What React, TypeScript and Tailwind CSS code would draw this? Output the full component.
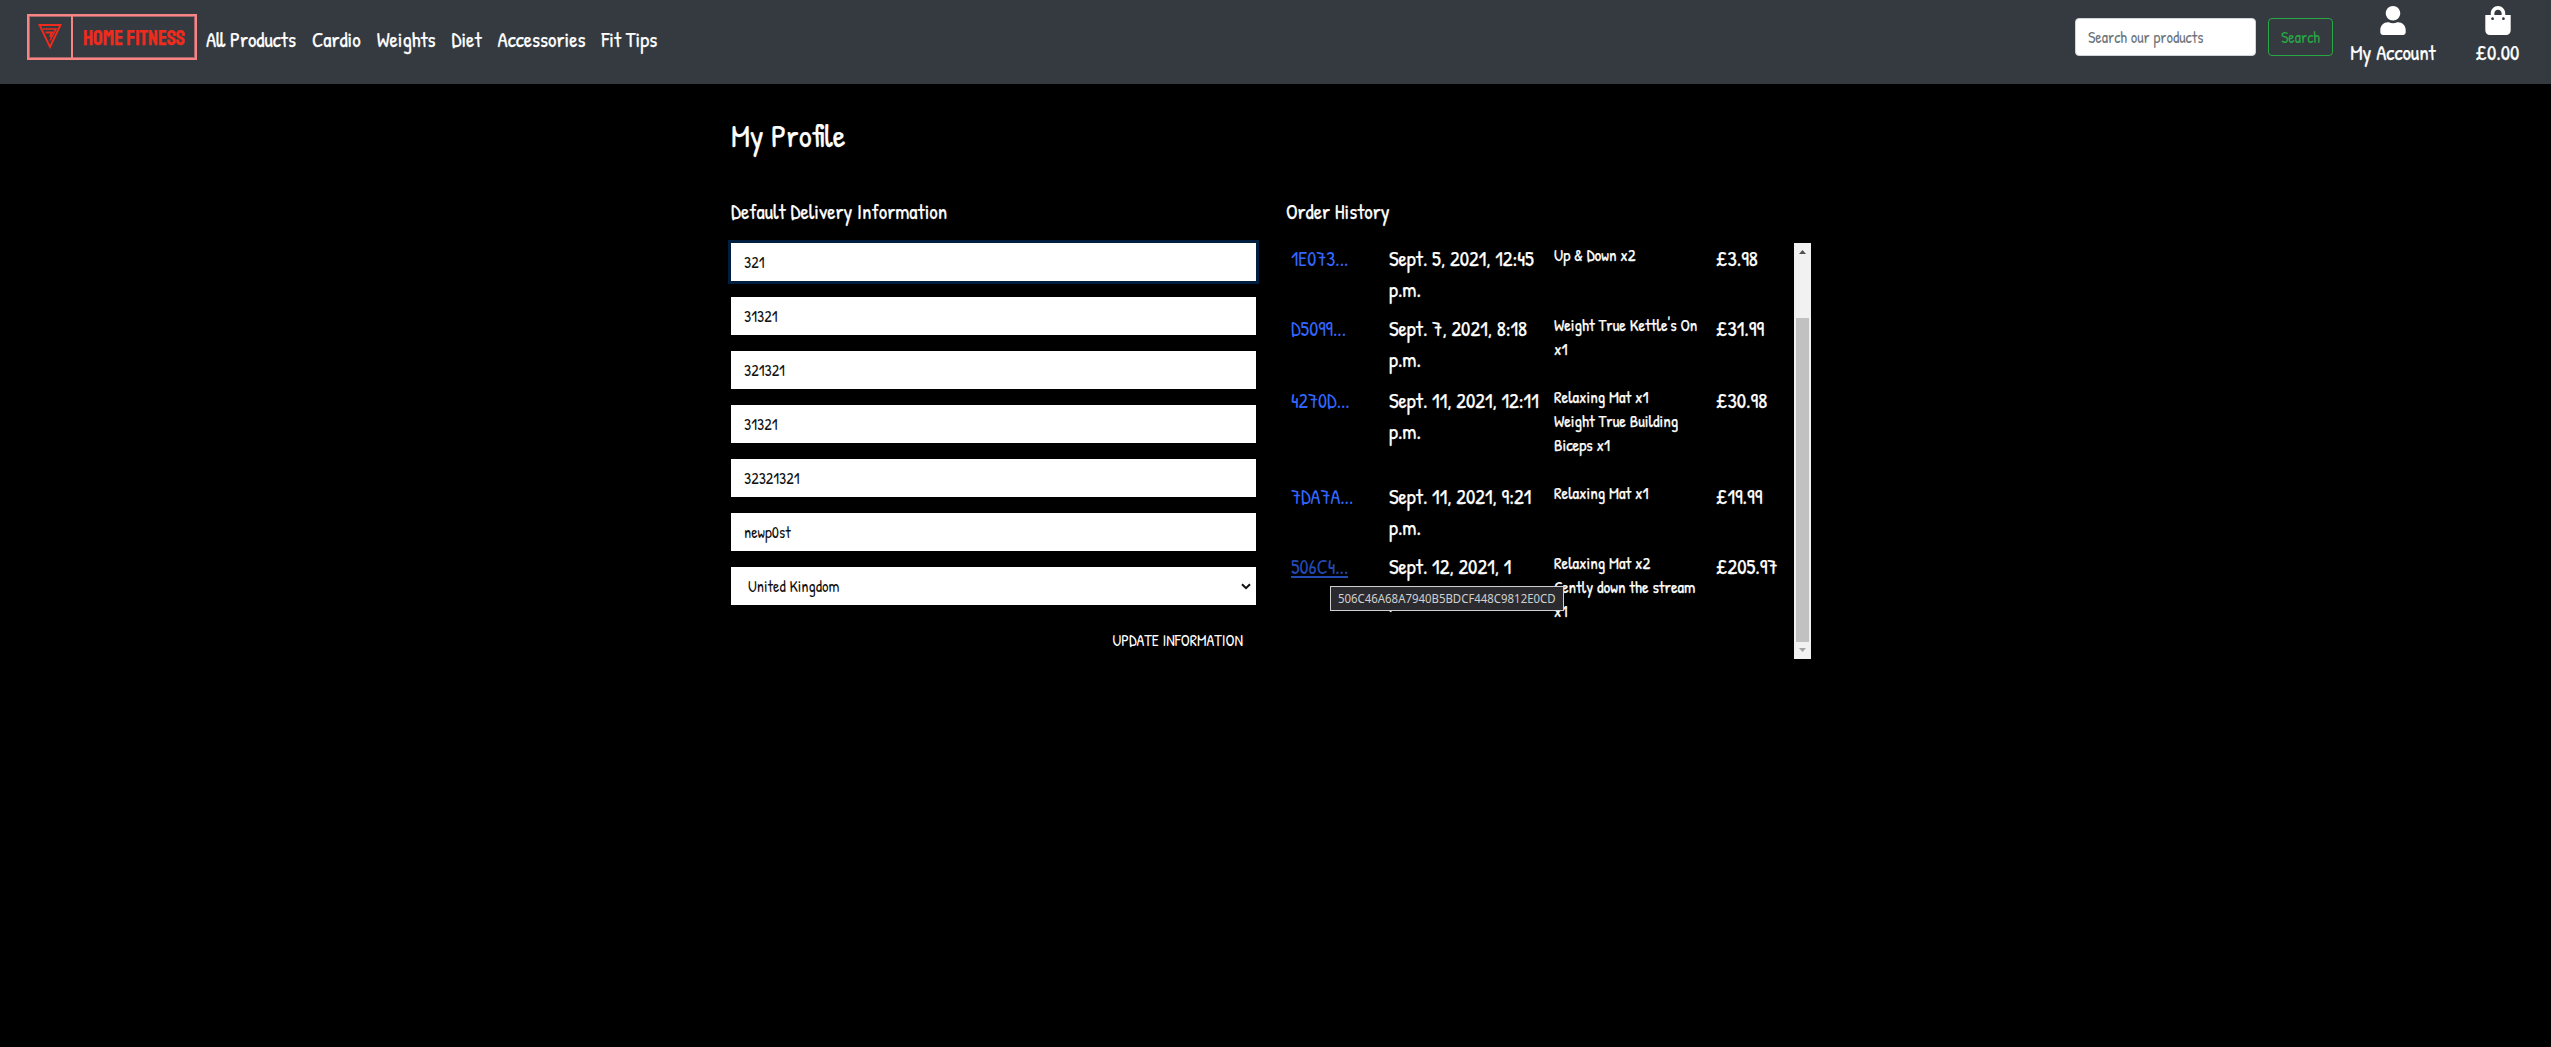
import React, { useLayoutEffect, useRef, useState } from "react";
import { FaUser, FaShoppingBag } from "react-icons/fa";

/** A single line of text condensed or widened to an exact width. */
function Fit({ w, children }: { w: number; children: string }) {
  const ref = useRef<HTMLSpanElement>(null);
  const [scale, setScale] = useState(1);
  useLayoutEffect(() => {
    if (ref.current) setScale(w / ref.current.offsetWidth);
  }, [w, children]);
  return (
    <span className="block whitespace-nowrap" style={{ width: w }}>
      <span ref={ref} className="inline-block origin-left align-top" style={{ transform: `scaleX(${scale})` }}>
        {children}
      </span>
    </span>
  );
}

const NAV = ["All Products", "Cardio", "Weights", "Diet", "Accessories", "Fit Tips"];
const FIELDS = ["321", "31321", "321321", "31321", "32321321", "newp0st"];

const ORDERS = [
  { id: "1E073...", date: "Sept. 5, 2021, 12:45", items: ["Up & Down x2"], total: "£3.98", height: "h-[70px]" },
  { id: "D5099...", date: "Sept. 7, 2021, 8:18", items: ["Weight True Kettle's On", "x1"], total: "£31.99", height: "h-[72px]" },
  { id: "4270D...", date: "Sept. 11, 2021, 12:11", items: ["Relaxing Mat x1", "Weight True Building", "Biceps x1"], total: "£30.98", height: "h-[96px]" },
  { id: "7DA7A...", date: "Sept. 11, 2021, 9:21", items: ["Relaxing Mat x1"], total: "£19.99", height: "h-[70px]" },
  { id: "506C4...", date: "Sept. 12, 2021, 1", items: ["Relaxing Mat x2", "Gently down the stream", "x1"], total: "£205.97", height: "h-[108px]" },
];

function Logo() {
  return (
    <div className="mt-[14px] flex h-[46px] w-[170px] shrink-0 border-2 border-[#f88484] inset-shadow-[0_0_0_1px_#a8666c]">
      <div className="flex w-[44px] items-center justify-center border-r-2 border-[#f88484] pb-px">
        <svg width="24" height="25" viewBox="0 0 24 25" fill="none" stroke="#ef2b1d" strokeWidth="1.9">
          <path d="M1.500 1h21L12 23z" />
          <path d="M5 5h13L12 16.500" strokeWidth="1.500" />
          <path d="M7.500 8.500h6.500L12 13" strokeWidth="2" />
        </svg>
      </div>
      <div className="flex flex-1 items-center pt-px pl-[10px] font-['Staatliches','Bebas_Neue',sans-serif] text-[21px] leading-[42px] text-[#ef2b1d]">
        <Fit w={102}>HOME FITNESS</Fit>
      </div>
    </div>
  );
}

export default function App() {
  return (
    <div className="h-[1047px] w-[2551px] overflow-hidden bg-black font-['Patrick_Hand','Lato',sans-serif] text-[20.8px] leading-[31px] whitespace-nowrap text-white [-webkit-text-stroke-width:0.25px]">
      <header className="flex h-[84px] items-start bg-[#343a40] pl-[27px]">
        <Logo />
        <nav className="mt-[24px] ml-[9px] flex gap-4">
          {NAV.map((t) => (
            <a key={t}>{t}</a>
          ))}
        </nav>
        <div className="ml-auto flex items-start pt-[18px] text-[16px] leading-[36px] [-webkit-text-stroke-width:0]">
          <div className="h-[38px] w-[181px] rounded border border-[#ced4da] bg-white pl-3 text-[#6c757d]">Search our products</div>
          <button className="ml-3 h-[38px] w-[65px] rounded border border-[#28a745] pl-3 text-left text-[#28a745]">Search</button>
        </div>
        <div className="ml-[17px] flex w-[86px] flex-col items-center pt-[6px]">
          <FaUser className="h-[29px] w-[26px]" />
          <span className="mt-[2px]">My Account</span>
        </div>
        <div className="mr-[31px] ml-[39px] flex w-[45px] flex-col items-center pt-[6px]">
          <FaShoppingBag className="h-[29px] w-[26px]" />
          <span className="mt-[2px]">£0.00</span>
        </div>
      </header>

      <main className="ml-[731px] w-[1080px]">
        <h1 className="pt-[33px] text-[32px] leading-[38px]">My Profile</h1>
        <div className="mt-[41px] flex">
          <section className="w-[555px]">
            <h2>Default Delivery Information</h2>
            <form className="mt-4 flex w-[525px] flex-col gap-4 text-[16px] leading-[38px] text-[#111] [-webkit-text-stroke-width:0]">
              {FIELDS.map((t, i) => (
                <div key={i} className={`h-[38px] bg-white pl-[13px] ${i === 0 ? "ring-3 ring-[#001f40]" : ""}`}>
                  {t}
                </div>
              ))}
              <div className="flex h-[38px] items-center justify-between bg-white pr-[5px] pl-[17px]">
                <span>United Kingdom</span>
                <svg width="10" height="7" viewBox="0 0 10 7" fill="none" stroke="#111" strokeWidth="2">
                  <path d="M1 1.200L5 5.200L9 1.200" />
                </svg>
              </div>
              <div className="flex h-[38px] justify-end pr-[13px] text-white">UPDATE INFORMATION</div>
            </form>
          </section>

          <section className="w-[525px]">
            <h2>Order History</h2>
            <div className="mt-4 flex h-[416px]">
              <div className="w-[508px] overflow-hidden">
                {ORDERS.map((o, i) => (
                  <div key={i} className={`grid grid-cols-[98px_165px_162px_78px] pl-[5px] ${o.height}`}>
                    <div className={`relative [-webkit-text-stroke-width:0] ${i === 4 ? "text-[#2449b3]" : "text-[#3366ff]"}`}>
                      <span className="relative inline-block text-[20.2px]">
                        {o.id}
                        {i === 4 && <span className="absolute top-[25px] left-0 h-[2px] w-full bg-[#2449b3]" />}
                      </span>
                      {i === 4 && (
                        <div className="absolute top-[35px] left-[39px] z-10 h-[25px] w-[234px] border border-[#cfcfcf] bg-[#2b2b2f] pl-[7px] font-['Noto_Sans'] text-[12.5px] leading-[23px] text-[#d0d0d0]">
                          <Fit w={218}>506C46A68A7940B5BDCF448C9812E0CD</Fit>
                        </div>
                      )}
                    </div>
                    <div>
                      <div>{o.date}</div>
                      <div>p.m.</div>
                    </div>
                    <ul className="text-[16.64px] leading-[24px]">
                      {o.items.map((t) => (
                        <li key={t}>{t}</li>
                      ))}
                    </ul>
                    <div>{o.total}</div>
                  </div>
                ))}
              </div>
              <div className="flex w-[17px] flex-col items-center bg-[#f1f1f1]">
                <svg width="17" height="17" viewBox="0 0 17 17" fill="#505050"><path d="M5 11h7L8.500 7z" /></svg>
                <div className="mt-[58px] h-[324px] w-[13px] bg-[#c1c1c1]" />
                <svg width="17" height="17" viewBox="0 0 17 17" fill="#a3a3a3"><path d="M5 6h7L8.500 10z" /></svg>
              </div>
            </div>
          </section>
        </div>
      </main>
    </div>
  );
}
